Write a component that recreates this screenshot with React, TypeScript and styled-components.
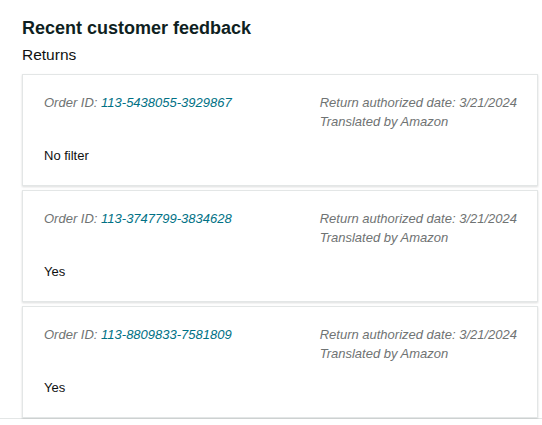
import React from "react";
import styled, { createGlobalStyle } from "styled-components";

const GlobalStyle = createGlobalStyle`
  body {
    margin: 0;
    background: #ffffff;
    font-family: "Liberation Sans", Arial, sans-serif;
  }
`;

const Page = styled.div`
  padding: 16px 4px 0 22px;
  border-bottom: 1px solid #e3e6e6;
  min-height: 401px;
`;

const Title = styled.h2`
  margin: 0;
  font-size: 18px;
  line-height: 24px;
  font-weight: 700;
  color: #0f1f22;
`;

const Subtitle = styled.div`
  margin-top: 5px;
  font-size: 15.5px;
  line-height: 20px;
  color: #0f1111;
`;

const CardList = styled.div`
  display: flex;
  flex-direction: column;
  gap: 4px;
  margin-top: 9px;
  width: 516px;
`;

const Card = styled.div`
  border: 1px solid #e3e6e6;
  box-shadow: 0 1px 2px rgba(15, 17, 17, 0.15);
  padding: 18px 20px 20px 21px;
  background: #fff;
`;

const CardHead = styled.div`
  display: flex;
  justify-content: space-between;
  align-items: flex-start;
`;

const Meta = styled.div`
  font-size: 13px;
  line-height: 19px;
  font-style: italic;
  color: #6f7373;
`;

const OrderLink = styled.span`
  color: #007185;
`;

const Body = styled.div`
  margin-top: 15px;
  font-size: 13px;
  line-height: 19px;
  color: #0f1111;
`;

interface IFeedback {
  orderId: string;
  date: string;
  text: string;
}

const feedback: IFeedback[] = [
  { orderId: "113-5438055-3929867", date: "3/21/2024", text: "No filter" },
  { orderId: "113-3747799-3834628", date: "3/21/2024", text: "Yes" },
  { orderId: "113-8809833-7581809", date: "3/21/2024", text: "Yes" },
];

const App = () => {
  return (
    <>
      <GlobalStyle />
      <Page>
        <Title>Recent customer feedback</Title>
        <Subtitle>Returns</Subtitle>
        <CardList>
          {feedback.map((item) => (
            <Card key={item.orderId}>
              <CardHead>
                <Meta>
                  Order ID: <OrderLink>{item.orderId}</OrderLink>
                </Meta>
                <Meta>
                  Return authorized date: {item.date}
                  <br />
                  Translated by Amazon
                </Meta>
              </CardHead>
              <Body>{item.text}</Body>
            </Card>
          ))}
        </CardList>
      </Page>
    </>
  );
};

export default App;
